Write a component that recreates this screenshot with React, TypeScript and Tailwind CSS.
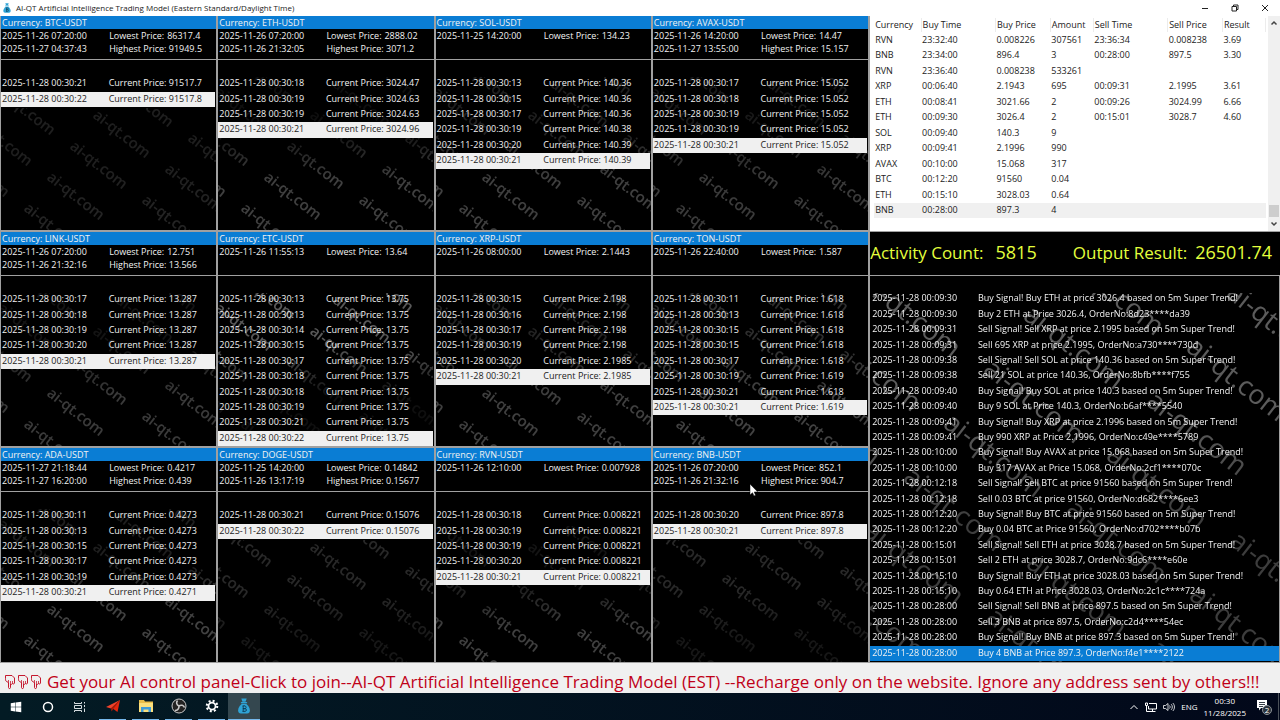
import React from "react";
import { FaWindows } from "react-icons/fa";
import { BsGear } from "react-icons/bs";

type Panel = {
  symbol: string;
  low: [string, string];
  high?: [string, string];
  ticks: [string, string][];
  mark: { from: number; top: number; bottom: number };
};

const panels: Panel[] = [
  {
    symbol: "BTC",
    low: ["11-26 07:20:00", "86317.4"],
    high: ["11-27 04:37:43", "91949.5"],
    ticks: [["21", "91517.7"], ["22", "91517.8"]],
    mark: { from: 48, top: 0.12, bottom: 0.14 },
  },
  {
    symbol: "ETH",
    low: ["11-26 07:20:00", "2888.02"],
    high: ["11-26 21:32:05", "3071.2"],
    ticks: [["18", "3024.47"], ["19", "3024.63"], ["19", "3024.63"], ["21", "3024.96"]],
    mark: { from: 17, top: 0.06, bottom: 0.25 },
  },
  {
    symbol: "SOL",
    low: ["11-25 14:20:00", "134.23"],
    ticks: [["13", "140.36"], ["15", "140.36"], ["17", "140.36"], ["19", "140.38"], ["20", "140.39"], ["21", "140.39"]],
    mark: { from: 17, top: 0.12, bottom: 0.25 },
  },
  {
    symbol: "AVAX",
    low: ["11-26 14:20:00", "14.47"],
    high: ["11-27 13:55:00", "15.157"],
    ticks: [["17", "15.052"], ["18", "15.052"], ["19", "15.052"], ["19", "15.052"], ["21", "15.052"]],
    mark: { from: 17, top: 0.1, bottom: 0.23 },
  },
  {
    symbol: "LINK",
    low: ["11-26 07:20:00", "12.751"],
    high: ["11-26 21:32:16", "13.566"],
    ticks: [["17", "13.287"], ["18", "13.287"], ["19", "13.287"], ["20", "13.287"], ["21", "13.287"]],
    mark: { from: 17, top: 0.08, bottom: 0.23 },
  },
  {
    symbol: "ETC",
    low: ["11-26 11:55:13", "13.64"],
    ticks: [["13", "13.75"], ["13", "13.75"], ["14", "13.75"], ["15", "13.75"], ["17", "13.75"], ["18", "13.75"], ["18", "13.75"], ["19", "13.75"], ["21", "13.75"], ["22", "13.75"]],
    mark: { from: 17, top: 0.35, bottom: 0.06 },
  },
  {
    symbol: "XRP",
    low: ["11-26 08:00:00", "2.1443"],
    ticks: [["15", "2.198"], ["16", "2.198"], ["17", "2.198"], ["19", "2.198"], ["20", "2.1985"], ["21", "2.1985"]],
    mark: { from: 17, top: 0.14, bottom: 0.25 },
  },
  {
    symbol: "TON",
    low: ["11-26 22:40:00", "1.587"],
    ticks: [["11", "1.618"], ["13", "1.618"], ["15", "1.618"], ["15", "1.618"], ["17", "1.618"], ["19", "1.619"], ["21", "1.618"], ["21", "1.619"]],
    mark: { from: 17, top: 0.18, bottom: 0.26 },
  },
  {
    symbol: "ADA",
    low: ["11-27 21:18:44", "0.4217"],
    high: ["11-27 16:20:00", "0.439"],
    ticks: [["11", "0.4273"], ["13", "0.4273"], ["15", "0.4273"], ["17", "0.4273"], ["19", "0.4273"], ["21", "0.4271"]],
    mark: { from: 17, top: 0.12, bottom: 0.26 },
  },
  {
    symbol: "DOGE",
    low: ["11-25 14:20:00", "0.14842"],
    high: ["11-26 13:17:19", "0.15677"],
    ticks: [["21", "0.15076"], ["22", "0.15076"]],
    mark: { from: 48, top: 0.16, bottom: 0.09 },
  },
  {
    symbol: "RVN",
    low: ["11-26 12:10:00", "0.007928"],
    ticks: [["18", "0.008221"], ["19", "0.008221"], ["19", "0.008221"], ["20", "0.008221"], ["21", "0.008221"]],
    mark: { from: 34, top: 0.08, bottom: 0.25 },
  },
  {
    symbol: "BNB",
    low: ["11-26 07:20:00", "852.1"],
    high: ["11-26 21:32:16", "904.7"],
    ticks: [["20", "897.8"], ["21", "897.8"]],
    mark: { from: 48, top: 0.16, bottom: 0.09 },
  },
];

const columns = ["Currency", "Buy Time", "Buy Price", "Amount", "Sell Time", "Sell Price", "Result"];

const trades = [
  ["RVN", "23:32:40", "0.008226", "307561", "23:36:34", "0.008238", "3.69"],
  ["BNB", "23:34:00", "896.4", "3", "00:28:00", "897.5", "3.30"],
  ["RVN", "23:36:40", "0.008238", "533261", "", "", ""],
  ["XRP", "00:06:40", "2.1943", "695", "00:09:31", "2.1995", "3.61"],
  ["ETH", "00:08:41", "3021.66", "2", "00:09:26", "3024.99", "6.66"],
  ["ETH", "00:09:30", "3026.4", "2", "00:15:01", "3028.7", "4.60"],
  ["SOL", "00:09:40", "140.3", "9", "", "", ""],
  ["XRP", "00:09:41", "2.1996", "990", "", "", ""],
  ["AVAX", "00:10:00", "15.068", "317", "", "", ""],
  ["BTC", "00:12:20", "91560", "0.04", "", "", ""],
  ["ETH", "00:15:10", "3028.03", "0.64", "", "", ""],
  ["BNB", "00:28:00", "897.3", "4", "", "", ""],
];

const logs = [
  ["00:09:30", "Buy Signal! Buy ETH at price 3026.4 based on 5m Super Trend!"],
  ["00:09:30", "Buy 2 ETH at Price 3026.4, OrderNo:8d23****da39"],
  ["00:09:31", "Sell Signal! Sell XRP at price 2.1995 based on 5m Super Trend!"],
  ["00:09:31", "Sell 695 XRP at price 2.1995, OrderNo:a730****730d"],
  ["00:09:38", "Sell Signal! Sell SOL at price 140.36 based on 5m Super Trend!"],
  ["00:09:38", "Sell 21 SOL at price 140.36, OrderNo:8bfb****f755"],
  ["00:09:40", "Buy Signal! Buy SOL at price 140.3 based on 5m Super Trend!"],
  ["00:09:40", "Buy 9 SOL at Price 140.3, OrderNo:b6af****5540"],
  ["00:09:41", "Buy Signal! Buy XRP at price 2.1996 based on 5m Super Trend!"],
  ["00:09:41", "Buy 990 XRP at Price 2.1996, OrderNo:c49e****5789"],
  ["00:10:00", "Buy Signal! Buy AVAX at price 15.068 based on 5m Super Trend!"],
  ["00:10:00", "Buy 317 AVAX at Price 15.068, OrderNo:2cf1****070c"],
  ["00:12:18", "Sell Signal! Sell BTC at price 91560 based on 5m Super Trend!"],
  ["00:12:18", "Sell 0.03 BTC at price 91560, OrderNo:d682****6ee3"],
  ["00:12:20", "Buy Signal! Buy BTC at price 91560 based on 5m Super Trend!"],
  ["00:12:20", "Buy 0.04 BTC at Price 91560, OrderNo:d702****b07b"],
  ["00:15:01", "Sell Signal! Sell ETH at price 3028.7 based on 5m Super Trend!"],
  ["00:15:01", "Sell 2 ETH at price 3028.7, OrderNo:9dc6****e60e"],
  ["00:15:10", "Buy Signal! Buy ETH at price 3028.03 based on 5m Super Trend!"],
  ["00:15:10", "Buy 0.64 ETH at Price 3028.03, OrderNo:2c1c****724a"],
  ["00:28:00", "Sell Signal! Sell BNB at price 897.5 based on 5m Super Trend!"],
  ["00:28:00", "Sell 3 BNB at price 897.5, OrderNo:c2d4****54ec"],
  ["00:28:00", "Buy Signal! Buy BNB at price 897.3 based on 5m Super Trend!"],
  ["00:28:00", "Buy 4 BNB at Price 897.3, OrderNo:f4e1****2122"],
];

type WatermarkProps = {
  id: string;
  from: number;
  top: number;
  bottom: number;
  size: number;
  weight: number;
  area: [number, number];
  origin: [number, number];
  down: [number, number];
  across: [number, number];
};

// diagonal lattice of "ai-qt.com", fading between the two opacities
const Watermark = ({ id, from, top, bottom, size, weight, area, origin, down, across }: WatermarkProps) => {
  const points: [number, number][] = [];
  for (let i = -8; i <= 10; i++) {
    for (let j = -4; j <= 4; j++) {
      const x = origin[0] + i * down[0] + j * across[0];
      const y = origin[1] + i * down[1] + j * across[1];
      const inside = x > -size * 3.5 && x < area[0] - size && y > from - size * 2 && y < area[1];
      if (inside) points.push([x, y]);
    }
  }
  return (
    <svg className="absolute inset-0 h-full w-full" aria-hidden="true">
      <defs>
        <linearGradient id={`${id}-fade`} x1="0" y1="0" x2="0" y2="1">
          <stop offset="0.3" stopColor="#fff" stopOpacity={top} />
          <stop offset="0.6" stopColor="#fff" stopOpacity={bottom} />
        </linearGradient>
        <mask id={`${id}-mask`} maskUnits="userSpaceOnUse" x="0" y={from} width="100%" height="100%">
          <rect y={from} width="100%" height="100%" fill={`url(#${id}-fade)`} />
        </mask>
      </defs>
      <g mask={`url(#${id}-mask)`} fill="#fff" fontSize={size} fontWeight={weight}>
        {points.map(([x, y]) => (
          <text key={`${x},${y}`} transform={`translate(${x} ${y}) rotate(38)`}>
            ai-qt.com
          </text>
        ))}
      </g>
    </svg>
  );
};

const MoneyBag = ({ className }: { className?: string }) => (
  <svg viewBox="0 0 24 30" className={className} aria-hidden="true">
    <path d="M7 1h10l-2 6H9z" fill="#2fa3d6" />
    <rect x="6" y="7.5" width="12" height="2.5" rx="1.2" fill="#2fa3d6" />
    <path d="M8 11h8c4 3 7 8 7 12.500c0 4-2 5.500-5 5.500H6c-3 0-5-1.500-5-5.500C1 19 4 14 8 11z" fill="#2fa3d6" />
    <path
      d="M9 15h4.500a2.500 2.500 0 0 1 0 5H10h4a2.500 2.500 0 0 1 0 5H9M10.500 15v10M12 13.500V15M12 25v1.500"
      fill="none"
      stroke="#0b3a52"
      strokeWidth="1.600"
    />
  </svg>
);

const CurrencyPanel = ({ panel }: { panel: Panel }) => (
  <section className="flex flex-col overflow-hidden whitespace-nowrap bg-black">
    <h2 className="h-[13px] bg-[#0a7dd4] pl-px leading-[13px]">Currency: {panel.symbol}-USDT</h2>
    <div className="h-[31px] border-b border-[#a0a0a0] leading-[13px]">
      <div className="flex pl-px">
        <span className="w-1/2">2025-{panel.low[0]}</span>
        <span className="w-14">Lowest Price:</span>
        <span className="pl-0.5">{panel.low[1]}</span>
      </div>
      {panel.high && (
        <div className="flex pl-px">
          <span className="w-1/2">2025-{panel.high[0]}</span>
          <span>Highest Price: {panel.high[1]}</span>
        </div>
      )}
    </div>
    <div className="relative grid flex-1">
      <Watermark
        id={panel.symbol}
        {...panel.mark}
        size={15}
        weight={600}
        area={[216, 170]}
        origin={[45, 119]}
        down={[-23, 31]}
        across={[95, 23]}
      />
      <ul className="relative grid grid-rows-11 pr-px pt-px">
        <li />
        {panel.ticks.map(([second, price], i) => (
          <li
            key={i}
            className={
              i === panel.ticks.length - 1
                ? "flex bg-[#f0f0f0] pl-px leading-[13px] text-[#222]"
                : "flex pl-px leading-[13px]"
            }>
            <span className="w-1/2">2025-11-28 00:30:{second}</span>
            <span>Current Price: {price}</span>
          </li>
        ))}
      </ul>
    </div>
  </section>
);

const TradeTable = () => (
  <div className="flex h-[215px] bg-white text-[#222]">
    <div className="flex-1 pl-1 pt-0.5">
      <table className="h-[200px] w-full table-fixed text-left">
        <colgroup>
          <col className="w-[12%]" />
          <col className="w-[19%]" />
          <col className="w-[14%]" />
          <col className="w-[11%]" />
          <col className="w-[19%]" />
          <col className="w-[14%]" />
          <col className="w-[11%]" />
        </colgroup>
        <thead>
          <tr>
            {columns.map((name) => (
              <th key={name} className="whitespace-nowrap border-r border-[#ececec] p-0 pl-px font-normal leading-[14px]">
                {name}
              </th>
            ))}
          </tr>
        </thead>
        <tbody>
          {trades.map((trade, i) => (
            <tr key={i} className={i === trades.length - 1 ? "bg-[#f0f0f0]" : ""}>
              {trade.map((value, j) => (
                <td key={j} className="whitespace-nowrap p-0 pl-px leading-[14px]">
                  {value}
                </td>
              ))}
            </tr>
          ))}
        </tbody>
      </table>
    </div>
    <div className="ml-0.5 flex w-3 flex-col items-center justify-between bg-[#f0f0f0] py-1">
      <svg viewBox="0 0 8 6" className="h-1.5 w-2 shrink-0" fill="none" stroke="#444" strokeWidth="1.500">
        <path d="M1.500 4.500L4 2l2.500 2.500" />
      </svg>
      <div className="mb-1 mt-auto h-3 w-2.5 bg-[#cdcdcd]" />
      <svg viewBox="0 0 8 6" className="h-1.5 w-2 shrink-0" fill="none" stroke="#444" strokeWidth="1.500">
        <path d="M1.500 1.500L4 4l2.500-2.500" />
      </svg>
    </div>
  </div>
);

const SignalLog = () => (
  <div className="relative mr-px grid flex-1 overflow-hidden bg-black">
    <Watermark
      id="log"
      from={17}
      top={0.36}
      bottom={0.24}
      size={27}
      weight={400}
      area={[410, 385]}
      origin={[152, 42]}
      down={[-40, 54]}
      across={[163, 32]}
    />
    <ul className="relative grid grid-rows-[repeat(25,minmax(0,1fr))] pb-px">
      <li />
      {logs.map(([time, text], i) => (
        <li
          key={i}
          className={
            i === logs.length - 1
              ? "flex whitespace-nowrap bg-[#0a7dd4] pl-0.5 leading-[14px]"
              : "flex whitespace-nowrap pl-0.5 leading-[14px]"
          }>
          <span className="w-[26%]">2025-11-28 {time}</span>
          <span>{text}</span>
        </li>
      ))}
    </ul>
  </div>
);

const TitleBar = () => (
  <header className="flex h-4 items-center bg-white pl-0.5 font-normal text-[#222]">
    <MoneyBag className="h-2.5 w-2.5" />
    <h1 className="pl-1 text-[8px]">AI-QT Artificial Intelligence Trading Model (Eastern Standard/Daylight Time)</h1>
    <div className="ml-auto flex items-center">
      <button aria-label="Minimize" className="flex w-[30px] justify-center">
        <svg viewBox="0 0 8 8" className="h-2 w-2" stroke="#222" fill="none">
          <path d="M1 4.500h6" />
        </svg>
      </button>
      <button aria-label="Restore" className="flex w-[30px] justify-center">
        <svg viewBox="0 0 8 8" className="h-2 w-2" stroke="#222" fill="none">
          <path d="M1 2.500h4.500V7H1zM2.500 2.500V1H7v4.500H5.500" />
        </svg>
      </button>
      <button aria-label="Close" className="flex w-[30px] justify-center">
        <svg viewBox="0 0 8 8" className="h-2 w-2" stroke="#222" fill="none">
          <path d="M1 1l6 6M7 1L1 7" />
        </svg>
      </button>
    </div>
  </header>
);

const PointDown = () => (
  <svg viewBox="0 0 12 16" className="h-4 w-3" fill="none" stroke="#c00018" strokeWidth="0.900" strokeLinejoin="round" aria-hidden="true">
    <path d="M1.500 1.500h6.500l2.500 2.500v5c0 1-1.700 1.300-2 .5c-.3 1-1.800 1-2 .2V13.500c0 1.400-2 1.400-2 0V8.500L2.500 7.500C1.500 7 1.500 5.500 1.500 4.500z" />
    <path d="M4.500 8.500V6M6.500 9.500V7M8.500 9.500V7" strokeWidth="0.700" />
  </svg>
);

const taskButton = "flex h-full w-8 items-center justify-center";
const openTaskButton = "mx-[3px] flex h-full w-[27px] items-center justify-center border-b border-[#76b9ed]";

const Taskbar = () => (
  <footer className="flex h-[27px] items-center bg-linear-to-r from-[#031b24] to-[#02081a] font-normal text-white">
    <button aria-label="Start" className={taskButton}>
      <FaWindows className="text-xs" />
    </button>
    <button aria-label="Search" className={taskButton}>
      <svg viewBox="0 0 12 12" className="h-3 w-3" fill="none" stroke="#fff" strokeWidth="1.500">
        <circle cx="6" cy="6" r="4.500" />
      </svg>
    </button>
    <button aria-label="Task View" className={taskButton}>
      <svg viewBox="0 0 12 12" className="h-3 w-3" fill="none" stroke="#d5dcdf">
        <path d="M.5 1v1.500h7V1M.5 4.500h7v3h-7zM.5 11V9.500h7V11M10.500 1v1.500M10.500 4v2M10.500 7.500V11" />
      </svg>
    </button>
    <button aria-label="Telegram" className={openTaskButton}>
      <svg viewBox="0 0 16 14" className="h-3.5 w-4">
        <path d="M15 1L1 8l5 1.500z" fill="#f0432b" />
        <path d="M15 1L7 9l5.500 4z" fill="#e2280f" />
        <path d="M6 9.500L15 1 8.500 9.700 6.500 12.500z" fill="#a81a08" />
      </svg>
    </button>
    <button aria-label="File Explorer" className={openTaskButton}>
      <svg viewBox="0 0 16 14" className="h-3.5 w-4">
        <path d="M1 1h5l1 1.500h8V12H1z" fill="#e9bd4a" />
        <path d="M1 4h14v9H1z" fill="#fbdf7c" />
        <path d="M3 13V8h10v5h-2.500v-2.500h-5V13z" fill="#3f9bd8" />
      </svg>
    </button>
    <button aria-label="OBS Studio" className={openTaskButton}>
      <svg viewBox="0 0 16 16" className="h-4 w-4" fill="none" stroke="#c8c8c8">
        <circle cx="8" cy="8" r="7" fill="#222" />
        <path d="M8 8C5.500 7 5 4.500 6.500 2.500M8 8c2-1.500 4.500-.8 5.500 1.500M8 8c.2 2.500-1.500 4.500-4 4.500" strokeWidth="1.600" />
      </svg>
    </button>
    <button aria-label="Settings" className={openTaskButton}>
      <svg viewBox="0 0 16 16" className="h-3.5 w-3.5" fill="none" stroke="#fff">
        <circle cx="8" cy="8" r="4" strokeWidth="2" />
        <circle cx="8" cy="8" r="6" strokeWidth="2.400" strokeDasharray="2.300 2.412" />
      </svg>
    </button>
    <button
      aria-label="AI-QT"
      className="flex h-full w-8 items-center justify-center border-b border-[#76b9ed] bg-[#34474f]">
      <MoneyBag className="h-4 w-3.5" />
    </button>
    <div className="ml-auto flex h-full items-center gap-1.5 text-[8px] leading-3">
      <svg viewBox="0 0 10 6" className="h-1.5 w-2.5" fill="none" stroke="#fff">
        <path d="M1.500 5L5 1.500 8.500 5" />
      </svg>
      <svg viewBox="0 0 12 10" className="h-2.5 w-3" fill="none" stroke="#fff">
        <path d="M4 1.500h7.500V7H3.500V4M.5 1h2v2.500h-2zM1.500 3.500V9.500h9M7.500 7v2.500" />
      </svg>
      <svg viewBox="0 0 12 10" className="h-2.5 w-3" fill="none" stroke="#fff">
        <path d="M.5 3.500h2L5 1.500v7l-2.500-2h-2zM6.500 3.500c.8.800.8 2.200 0 3M8.200 2.200c1.500 1.500 1.500 4.100 0 5.600M9.800 1c2.200 2.200 2.200 5.800 0 8" strokeWidth="0.800" />
      </svg>
      <span>ENG</span>
      <div className="text-center">
        <div>00:30</div>
        <div>11/28/2025</div>
      </div>
      <div className="relative ml-1 h-4 w-4">
        <svg viewBox="0 0 16 16" className="h-4 w-4">
          <path d="M1 1h10v8H5l-2 2.500V9H1z" fill="#fff" />
          <path d="M3 3.500h6M3 5.500h6M3 7.500h4" stroke="#06101c" strokeWidth="0.800" />
          <circle cx="11" cy="11" r="4.500" fill="#2c333b" stroke="#8b9096" />
        </svg>
        <span className="absolute -right-px bottom-0 w-3 text-center leading-[10px]">2</span>
      </div>
      <div className="h-full w-0.5 border-l border-[#4a5058]" />
    </div>
  </footer>
);

const App = () => {
  return (
    <div className="relative flex min-h-screen flex-col overflow-hidden bg-[#f0f0f0] font-['Open_Sans','Noto_Sans',sans-serif] text-[9px] text-[#f2f2f2]">
      <TitleBar />
      <main className="flex flex-1 gap-0.5 bg-[#a0a0a0] pb-px pl-px">
        <div className="grid w-[67.8%] grid-cols-4 grid-rows-3 gap-0.5 font-medium">
          {panels.map((panel) => (
            <CurrencyPanel key={panel.symbol} panel={panel} />
          ))}
        </div>
        <div className="flex min-w-0 flex-1 flex-col gap-px">
          <TradeTable />
          <dl className="flex h-[43px] items-center justify-between bg-black pb-0.5 pr-2 text-lg text-[#e4ff3c]">
            <div className="flex items-baseline gap-3">
              <dt className="text-[17px]">Activity Count:</dt>
              <dd>5815</dd>
            </div>
            <div className="flex items-baseline gap-2">
              <dt className="text-[17px]">Output Result:</dt>
              <dd>26501.74</dd>
            </div>
          </dl>
          <div className="flex flex-1 flex-col font-medium">
            <SignalLog />
          </div>
        </div>
      </main>
      <div className="flex h-[30px] items-center gap-px whitespace-nowrap pl-1 pt-2 text-[17px] text-[#c00018]">
        <PointDown />
        <PointDown />
        <PointDown />
        <p className="pl-1">
          Get your AI control panel-Click to join--AI-QT Artificial Intelligence Trading Model (EST) --Recharge only on
          the website. Ignore any address sent by others!!!
        </p>
      </div>
      <Taskbar />
      <svg viewBox="0 0 10 14" className="absolute left-[749px] top-[483px] h-3.5 w-2.5" aria-hidden="true">
        <path d="M1 1v11l2.500-2.300L5 13l1.600-.7L5.200 9H8.800z" fill="#fff" stroke="#000" strokeWidth="0.500" />
      </svg>
    </div>
  );
};

export default App;
